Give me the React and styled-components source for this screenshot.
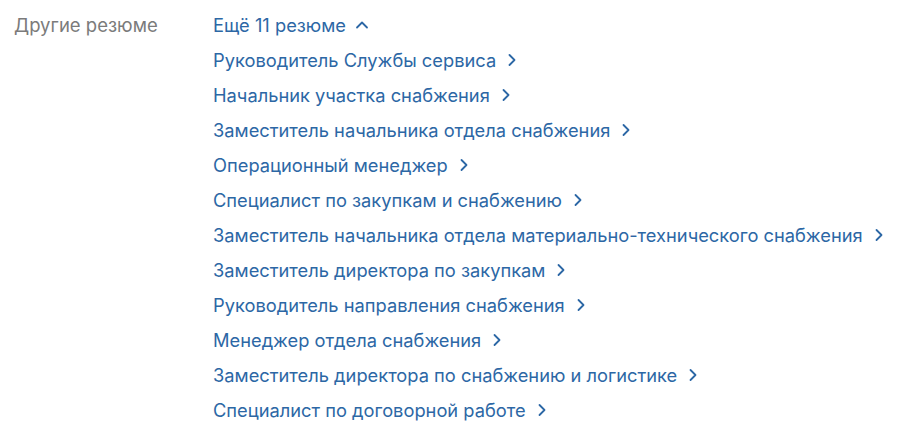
import React from 'react';
import styled, { createGlobalStyle } from 'styled-components';

const GlobalStyle = createGlobalStyle`
  body {
    margin: 0;
    background: #fff;
    font-family: 'Inter', 'Noto Sans', sans-serif;
  }
`;

const Section = styled.div`
  display: grid;
  grid-template-columns: 199px 1fr;
  padding: 11px 14px;
`;

const Label = styled.div`
  font-size: 18.5px;
  line-height: 28px;
  color: #7b7b7b;
`;

const List = styled.ul`
  list-style: none;
  margin: 0;
  padding: 0;
  display: flex;
  flex-direction: column;
  gap: 7px;
`;

const Item = styled.li`
  display: flex;
  align-items: center;
  gap: 8px;
  font-size: 18.3px;
  line-height: 28px;
  color: #2c67a5;
  cursor: pointer;
`;

const Chevron = ({ up }) => (
  <svg width="16" height="16" viewBox="0 0 16 16" fill="none">
    <path
      d={up ? 'M3 10.5l5-5 5 5' : 'M5.5 3l5 5-5 5'}
      stroke="#2c67a5"
      strokeWidth="1.8"
      strokeLinecap="round"
      strokeLinejoin="round"
    />
  </svg>
);

const resumes = [
  'Руководитель Службы сервиса',
  'Начальник участка снабжения',
  'Заместитель начальника отдела снабжения',
  'Операционный менеджер',
  'Специалист по закупкам и снабжению',
  'Заместитель начальника отдела материально-технического снабжения',
  'Заместитель директора по закупкам',
  'Руководитель направления снабжения',
  'Менеджер отдела снабжения',
  'Заместитель директора по снабжению и логистике',
  'Специалист по договорной работе',
];

export default function App() {
  return (
    <>
      <GlobalStyle />
      <Section>
        <Label>Другие резюме</Label>
        <List>
          <Item>
            Ещё {resumes.length} резюме <Chevron up />
          </Item>
          {resumes.map((title) => (
            <Item key={title}>
              {title} <Chevron />
            </Item>
          ))}
        </List>
      </Section>
    </>
  );
}
